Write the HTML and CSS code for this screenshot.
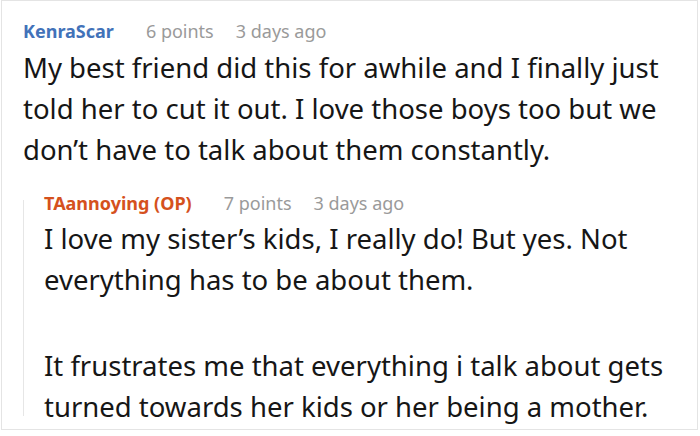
FILE: index.html
```html
<!DOCTYPE html>
<html>
<head>
<meta charset="utf-8">
<link rel="stylesheet" href="styles.css">
</head>
<body>
<div class="frame">
  <div class="comment">
    <div class="meta">
      <span class="user">KenraScar</span>
      <span class="points">6 points</span>
      <span class="time">3 days ago</span>
    </div>
    <p class="text">My best friend did this for awhile and I finally just told her to cut it out. I love those boys too but we don’t have to talk about them constantly.</p>
    <div class="reply">
      <div class="thread-line"></div>
      <div class="reply-body">
        <div class="meta">
          <span class="user op">TAannoying (OP)</span>
          <span class="points">7 points</span>
          <span class="time">3 days ago</span>
        </div>
        <p class="text">I love my sister’s kids, I really do! But yes. Not everything has to be about them.</p>
        <p class="text para">It frustrates me that everything i talk about gets turned towards her kids or her being a mother.</p>
      </div>
    </div>
  </div>
</div>
</body>
</html>
```
FILE: styles.css
```css
html, body {
  margin: 0;
  padding: 0;
  background: #ffffff;
}
body {
  font-family: "Noto Sans", "Open Sans", sans-serif;
  color: #161616;
}
.frame {
  box-sizing: border-box;
  margin-left: 1px;
  width: 697px;
  height: 430px;
  border: 1px solid #e4e4e4;
  overflow: hidden;
}
.comment {
  padding: 20px 0 0 21px;
}
.meta {
  display: flex;
  align-items: baseline;
  font-size: 18px;
  line-height: 20px;
  white-space: nowrap;
}
.user {
  font-weight: 700;
  color: #4272b9;
}
.user.op {
  color: #d5511d;
}
.points {
  color: #9a9a9a;
  margin-left: 32px;
}
.time {
  color: #9a9a9a;
  margin-left: 22px;
}
.text {
  margin: 5.5px 0 0 0;
  font-size: 27.5px;
  line-height: 41px;
  width: 670px;
}
.reply {
  display: flex;
  margin-top: 23px;
}
.thread-line {
  width: 1px;
  background: #e6e6e6;
  margin: 7.5px 0 10.5px 0;
  flex: none;
}
.reply-body {
  padding-left: 20px;
}
.reply .text {
  margin-top: 5px;
  width: 650px;
}
.reply .text.para {
  margin-top: 45px;
}
```
